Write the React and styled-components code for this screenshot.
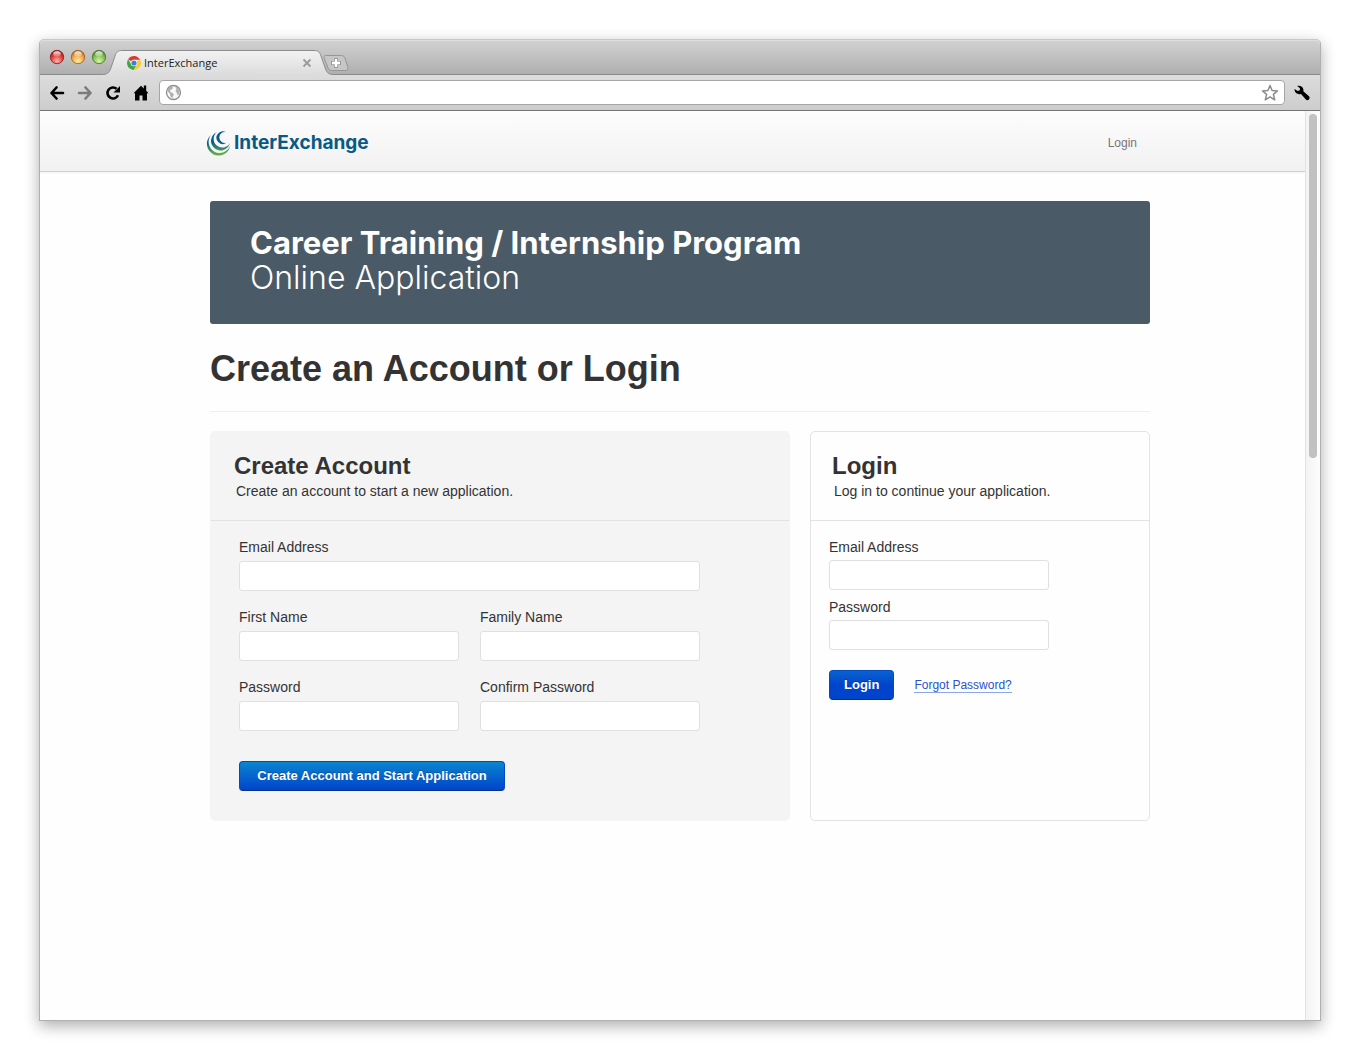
import React from "react";
import styled, { createGlobalStyle, css } from "styled-components";

const GlobalStyle = createGlobalStyle`
  *, *::before, *::after { box-sizing: border-box; }
  body {
    margin: 0;
    background: #fff;
    color: #333;
    font-family: "Liberation Sans", Arial, sans-serif;
    font-size: 14px;
    line-height: 20px;
  }
  h1, h2, p { margin: 0; }
`;

/* ---------- browser window ---------- */

const Desktop = styled.div`
  display: flex;
  min-height: 100vh;
  padding: 39px;
`;

const Window = styled.div`
  flex: 1;
  min-width: 0;
  display: flex;
  flex-direction: column;
  border: 1px solid #b0b0b0;
  border-top-color: #c8c8c8;
  border-radius: 5px 5px 0 0;
  background: #fefefe;
  box-shadow: 0 5px 15px rgba(0, 0, 0, 0.32);
`;

const TitleBar = styled.div`
  display: flex;
  align-items: flex-end;
  height: 35px;
  padding-left: 9px;
  border-radius: 4px 4px 0 0;
  background: linear-gradient(#d2d2d2, #aeaeae);
  box-shadow: inset 0 1px 0 #dedede, inset 0 -1px 0 #8a8a8a;
`;

const Lights = styled.div`
  display: flex;
  gap: 5px;
  height: 26px;
`;

const TabShell = styled.div`
  display: flex;
  height: 25px;
  margin-left: -5px;
`;

const TabBody = styled.div`
  display: flex;
  align-items: center;
  width: 192px;
  padding: 0 2px 0 5px;
  border-top: 1px solid #8c8c8c;
  background: linear-gradient(#f2f2f2, #dcdcdc);
  font: 11px/16px "Open Sans", "Noto Sans", sans-serif;
  color: #222;
`;

const TabTitle = styled.span`
  flex: 1;
  margin-left: 3px;
`;

const IconButton = styled.button`
  display: flex;
  align-items: center;
  justify-content: center;
  width: ${(p) => p.$width || 28}px;
  padding: 0;
  border: 0;
  background: none;
  color: ${(p) => p.$color || "#000"};
`;

const NewTab = styled(IconButton)`
  align-items: flex-start;
  height: 20px;
  margin-left: -12px;
`;

const Toolbar = styled.div`
  display: flex;
  align-items: center;
  height: 36px;
  padding: 0 2px 0 3px;
  border-bottom: 1px solid #757575;
  background: linear-gradient(#dcdcdc, #cdcdcd);
`;

const AddressBar = styled.div`
  flex: 1;
  display: flex;
  align-items: center;
  height: 25px;
  margin-left: 4px;
  padding: 0 5px;
  border: 1px solid #a6a6a6;
  border-radius: 4px;
  background: #fff;
`;

const AddressInput = styled.input`
  flex: 1;
  min-width: 0;
  border: 0;
  outline: 0;
  background: none;
  font: 13px/18px "Open Sans", sans-serif;
`;

const Viewport = styled.div`
  flex: 1;
  display: flex;
`;

const Page = styled.div`
  flex: 1;
  min-width: 0;
`;

const ScrollTrack = styled.div`
  width: 15px;
  padding: 3px 3px 0;
  border-left: 1px solid #e2e2e2;
  background: linear-gradient(90deg, #f3f3f3, #fdfdfd);
`;

const ScrollThumb = styled.div`
  height: 38%;
  border-radius: 4px;
  background: #c1c1c1;
`;

/* ---------- site ---------- */

const SiteHeader = styled.header`
  padding-left: 15px;
  border-bottom: 1px solid #d0d0d0;
  background: linear-gradient(#fdfdfd, #f1f1f1);
  box-shadow: 0 1px 2px rgba(0, 0, 0, 0.06);
`;

const HeaderInner = styled.div`
  display: flex;
  align-items: center;
  justify-content: space-between;
  max-width: 948px;
  height: 60px;
  margin: 0 auto;
  padding: 4px 17px 0 0;
`;

const Logo = styled.a`
  display: flex;
  align-items: center;
  gap: 3px;
  color: #075a86;
  font: 700 19px/26px Inter, sans-serif;
  text-decoration: none;
`;

const NavLink = styled.a`
  color: #777;
  font-size: 12px;
  text-decoration: none;
`;

const Content = styled.main`
  padding: 29px 0 20px 15px;
`;

const Container = styled.div`
  max-width: 940px;
  margin: 0 auto;
`;

const Banner = styled.div`
  padding: 24px 40px 29px;
  border-radius: 3px;
  background: #4a5a66;
  color: #fff;
  font: 300 32px/35px Inter, sans-serif;
`;

const BannerTitle = styled.strong`
  display: block;
  font-size: 31px;
  font-weight: 700;
`;

const PageTitle = styled.h1`
  margin: 25px 0 19px;
  padding-bottom: 22px;
  border-bottom: 1px solid #eee;
  font-size: 36px;
  line-height: 40px;
`;

const Cards = styled.div`
  display: grid;
  grid-template-columns: 1fr 340px;
  gap: 20px;
`;

const Card = styled.section`
  min-height: 390px;
  border: 1px solid #e3e3e3;
  border-radius: 5px;
  ${(p) =>
    p.$filled &&
    css`
      border-color: #f4f4f4;
      background: #f4f4f4;
    `}
`;

const CardHead = styled.div`
  padding: 19px ${(p) => p.$inset}px;
  border-bottom: 1px solid #e2e2e2;
`;

const CardTitle = styled.h2`
  font-size: 24px;
  line-height: 30px;
`;

const CardNote = styled.p`
  padding-left: 2px;
`;

const Form = styled.form`
  padding: 16px ${(p) => p.$inset}px 29px;
`;

const Fields = styled.div`
  display: grid;
  grid-template-columns: repeat(${(p) => p.$columns}, 220px);
  gap: ${(p) => p.$rowGap}px 21px;
`;

const FieldBox = styled.div`
  display: flex;
  flex-direction: column;
  gap: ${(p) => p.$gap}px;
  ${(p) => p.$wide && "grid-column: 1 / -1;"}
`;

const TextInput = styled.input`
  width: 100%;
  height: 30px;
  padding: 4px 8px;
  border: 1px solid #e0e0e0;
  border-radius: 3px;
  background: #fff;
  font: inherit;
`;

const Actions = styled.div`
  display: flex;
  align-items: center;
  gap: 20px;
  margin-top: ${(p) => p.$top}px;
`;

const Button = styled.button`
  height: 30px;
  min-width: ${(p) => p.$minWidth}px;
  padding: 0 14px;
  border: 1px solid #0449c4;
  border-bottom-color: #04318c;
  border-radius: 4px;
  background: linear-gradient(${(p) => p.$from}, #0044cc ${(p) => p.$stop});
  color: #fff;
  font: bold 13px/20px "Liberation Sans", Arial, sans-serif;
  text-shadow: 0 -1px 0 rgba(0, 0, 0, 0.25);
`;

const ForgotLink = styled.a`
  border-bottom: 1px solid #8ea4e8;
  color: #2a52cc;
  font-size: 12px;
  line-height: 14px;
  text-decoration: none;
`;

/* ---------- drawings ---------- */

function Light({ id, edge, base, glow }) {
  return (
    <svg width="16" height="16" viewBox="0 0 16 16" aria-hidden="true">
      <defs>
        <radialGradient id={id} cx="0.5" cy="0.8" r="0.75">
          <stop offset="0" stopColor={glow} />
          <stop offset="0.6" stopColor={base} />
          <stop offset="1" stopColor={edge} />
        </radialGradient>
        <linearGradient id={`${id}-shine`} x1="0" y1="0" x2="0" y2="1">
          <stop offset="0" stopColor="#fff" stopOpacity="0.9" />
          <stop offset="1" stopColor="#fff" stopOpacity="0.15" />
        </linearGradient>
      </defs>
      <circle cx="8" cy="8" r="6.7" fill={`url(#${id})`} stroke={edge} strokeOpacity="0.85" />
      <ellipse cx="8" cy="5" rx="3.800" ry="2.700" fill={`url(#${id}-shine)`} />
    </svg>
  );
}

function TabEdge({ side }) {
  const flip = side === "right" ? "translate(20 0) scale(-1 1)" : undefined;
  return (
    <svg width="20" height="25" viewBox="0 0 20 25" aria-hidden="true">
      <defs>
        <linearGradient id={`edge-${side}`} x1="0" y1="0" x2="0" y2="25" gradientUnits="userSpaceOnUse">
          <stop offset="0" stopColor="#f2f2f2" />
          <stop offset="1" stopColor="#dcdcdc" />
        </linearGradient>
      </defs>
      <g transform={flip}>
        <path d="M0 25V24.5C5 24.5 7 23 8.500 19L13 6C14.300 2 16 .5 20 .5V25Z" fill={`url(#edge-${side})`} />
        <path d="M0 24.500C5 24.500 7 23 8.500 19L13 6C14.300 2 16 .5 20 .5" fill="none" stroke="#8c8c8c" />
      </g>
    </svg>
  );
}

const ChromeIcon = () => (
  <svg width="14" height="14" viewBox="0 0 14 14" aria-hidden="true">
    <path d="M7 7L1.100 3.300A7 7 0 0 1 13.200 3.800H7Z" fill="#dd3b2e" />
    <path d="M7 7L13.200 3.800A7 7 0 0 1 6.500 14L9.800 8.500Z" fill="#fccd2b" />
    <path d="M7 7L9.800 8.500L6.500 14A7 7 0 0 1 1.100 3.300L4.300 8.600Z" fill="#3fa548" />
    <circle cx="7" cy="7" r="3.200" fill="#fff" />
    <circle cx="7" cy="7" r="2.600" fill="#3f7fd9" />
  </svg>
);

const CloseIcon = () => (
  <svg width="10" height="10" viewBox="0 0 10 10" aria-hidden="true">
    <path d="M1.500 1.500L8.500 8.500M8.500 1.500L1.500 8.500" stroke="currentColor" strokeWidth="1.800" />
  </svg>
);

const NewTabIcon = () => (
  <svg width="26" height="17" viewBox="0 0 26 17" aria-hidden="true">
    <path
      d="M2.500 .5H18.500Q21 .5 22 3L25 12.500Q25.800 15.500 23 15.500H8.500Q6 15.500 5 13L1 2.500Q.5 .5 2.500 .5Z"
      fill="#c6c6c6"
      stroke="#969696"
    />
    <path d="M13 3V13M8 8H18" stroke="#9a9a9a" strokeWidth="4" />
    <path d="M13 4V12M9 8H17" stroke="#fff" strokeWidth="2.300" />
  </svg>
);

const ArrowIcon = ({ forward }) => (
  <svg width="16" height="14" viewBox="0 0 16 14" aria-hidden="true">
    <path
      d="M7.500 1.500L2.500 7L7.500 12.500M3 7H14"
      transform={forward ? "translate(16 0) scale(-1 1)" : undefined}
      fill="none"
      stroke="currentColor"
      strokeWidth="2.600"
      strokeLinecap="round"
      strokeLinejoin="round"
    />
  </svg>
);

const ReloadIcon = () => (
  <svg width="16" height="16" viewBox="0 0 16 16" aria-hidden="true">
    <path d="M13 10.300A5.500 5.500 0 1 1 11.600 3.800" fill="none" stroke="currentColor" strokeWidth="2.600" />
    <path d="M15 1V7.500H8.500Z" fill="currentColor" />
  </svg>
);

const HomeIcon = () => (
  <svg width="16" height="16" viewBox="0 0 16 16" aria-hidden="true">
    <path d="M8 .8L10.800 3.500V.5H13.200V5.800L15.500 8.200H14V15.500H9.500V10.500H6.500V15.500H2V8.200H.5Z" fill="currentColor" />
  </svg>
);

const GlobeIcon = () => (
  <svg width="17" height="17" viewBox="0 0 17 17" aria-hidden="true">
    <circle cx="8.500" cy="8.500" r="7" fill="#f8f8f8" stroke="#8d8d8d" strokeWidth="1.300" />
    <path
      d="M3 4.500L6.500 2L8 3.500L6.800 5.500L5 6L5.500 8L7.500 9L9 10.500L7.800 12.500L7.500 14.500L5.500 12.500L4.800 9.500L2.500 7.500Z"
      fill="#b0b0b0"
    />
    <path d="M10 2.500L13 4L14.700 7L14 10.500L12.500 11.500L12 9L10.500 7.500L11.500 5Z" fill="#b0b0b0" />
  </svg>
);

const StarIcon = () => (
  <svg width="18" height="18" viewBox="0 0 18 18" aria-hidden="true">
    <path
      d="M9 1.500L11.100 6.500L16.500 6.900L12.400 10.400L13.700 15.800L9 12.900L4.300 15.800L5.600 10.400L1.500 6.900L6.900 6.500Z"
      fill="#fff"
      stroke="#8b8b8b"
      strokeWidth="1.500"
      strokeLinejoin="round"
    />
  </svg>
);

const WrenchIcon = () => (
  <svg width="16" height="16" viewBox="0 0 16 16" aria-hidden="true">
    <path
      d="M3.200 .9C5.600 .1 8.500 1.300 9.300 3.900C9.500 4.800 9.500 5.500 9.300 6.300L15 11.300C16 12.300 15.600 13.600 14.900 14.400C14.100 15.200 12.800 15.500 11.900 14.600L7 8.900C4.200 9.800 1.300 8.500 .6 5.600C.5 4.900 .5 4.400 .6 3.900L3.600 6L5.800 5.300L6 3.200Z"
      fill="currentColor"
    />
  </svg>
);

const LogoMark = () => (
  <svg width="25" height="25" viewBox="0 0 25 25" aria-hidden="true">
    <defs>
      <linearGradient id="mark" x1="0" y1="0" x2="0" y2="25" gradientUnits="userSpaceOnUse">
        <stop offset="0.45" stopColor="#07598a" />
        <stop offset="0.66" stopColor="#2f8272" />
        <stop offset="0.9" stopColor="#62ac46" />
      </linearGradient>
    </defs>
    <g fill="url(#mark)">
      <path d="M5 4A11.700 11.700 0 1 0 24.200 14.500A11.100 11.100 0 1 1 5 4Z" />
      <path d="M11 1A9.600 9.600 0 1 0 24 12A8.700 8.700 0 1 1 11 1Z" />
      <path d="M20 1.200A6.300 6.300 0 1 0 20.500 11.800A5.500 5.500 0 1 1 20 1.200Z" />
    </g>
  </svg>
);

/* ---------- composition ---------- */

function Field({ id, label, type = "text", wide, gap }) {
  return (
    <FieldBox $wide={wide} $gap={gap}>
      <label htmlFor={id}>{label}</label>
      <TextInput id={id} type={type} />
    </FieldBox>
  );
}

const hold = (e) => e.preventDefault();

function BrowserChrome() {
  return (
    <>
      <TitleBar>
        <Lights>
          <Light id="light-close" edge="#8f1f1c" base="#e23a38" glow="#ffb8b0" />
          <Light id="light-min" edge="#a8601c" base="#f3a54a" glow="#fff0a0" />
          <Light id="light-zoom" edge="#47792a" base="#80c04e" glow="#d8f7a8" />
        </Lights>
        <TabShell>
          <TabEdge side="left" />
          <TabBody>
            <ChromeIcon />
            <TabTitle>InterExchange</TabTitle>
            <IconButton $width={10} $color="#9a9a9a" aria-label="Close tab">
              <CloseIcon />
            </IconButton>
          </TabBody>
          <TabEdge side="right" />
        </TabShell>
        <NewTab aria-label="New tab">
          <NewTabIcon />
        </NewTab>
      </TitleBar>
      <Toolbar>
        <IconButton aria-label="Back">
          <ArrowIcon />
        </IconButton>
        <IconButton aria-label="Forward" $color="#7b7b7b">
          <ArrowIcon forward />
        </IconButton>
        <IconButton aria-label="Reload">
          <ReloadIcon />
        </IconButton>
        <IconButton aria-label="Home">
          <HomeIcon />
        </IconButton>
        <AddressBar>
          <GlobeIcon />
          <AddressInput aria-label="Address" />
          <IconButton $width={18} aria-label="Bookmark">
            <StarIcon />
          </IconButton>
        </AddressBar>
        <IconButton $width={33} aria-label="Settings">
          <WrenchIcon />
        </IconButton>
      </Toolbar>
    </>
  );
}

export default function App() {
  return (
    <>
      <GlobalStyle />
      <Desktop>
        <Window>
          <BrowserChrome />
          <Viewport>
            <Page>
              <SiteHeader>
                <HeaderInner>
                  <Logo href="#home">
                    <LogoMark />
                    InterExchange
                  </Logo>
                  <NavLink href="#login">Login</NavLink>
                </HeaderInner>
              </SiteHeader>
              <Content>
                <Container>
                  <Banner>
                    <BannerTitle>Career Training / Internship Program</BannerTitle>
                    Online Application
                  </Banner>
                  <PageTitle>Create an Account or Login</PageTitle>
                  <Cards>
                    <Card $filled>
                      <CardHead $inset={23}>
                        <CardTitle>Create Account</CardTitle>
                        <CardNote>Create an account to start a new application.</CardNote>
                      </CardHead>
                      <Form $inset={28} onSubmit={hold}>
                        <Fields $columns={2} $rowGap={16}>
                          <Field id="new-email" label="Email Address" type="email" wide gap={4} />
                          <Field id="first-name" label="First Name" gap={4} />
                          <Field id="family-name" label="Family Name" gap={4} />
                          <Field id="new-password" label="Password" type="password" gap={4} />
                          <Field id="confirm-password" label="Confirm Password" type="password" gap={4} />
                        </Fields>
                        <Actions $top={30}>
                          <Button type="submit" $minWidth={266} $from="#0a86cf" $stop="100%">
                            Create Account and Start Application
                          </Button>
                        </Actions>
                      </Form>
                    </Card>
                    <Card id="login">
                      <CardHead $inset={21}>
                        <CardTitle>Login</CardTitle>
                        <CardNote>Log in to continue your application.</CardNote>
                      </CardHead>
                      <Form $inset={18} onSubmit={hold}>
                        <Fields $columns={1} $rowGap={7}>
                          <Field id="email" label="Email Address" type="email" gap={3} />
                          <Field id="password" label="Password" type="password" gap={3} />
                        </Fields>
                        <Actions $top={20}>
                          <Button type="submit" $minWidth={65} $from="#0a62cf" $stop="50%">
                            Login
                          </Button>
                          <ForgotLink href="#forgot">Forgot Password?</ForgotLink>
                        </Actions>
                      </Form>
                    </Card>
                  </Cards>
                </Container>
              </Content>
            </Page>
            <ScrollTrack>
              <ScrollThumb />
            </ScrollTrack>
          </Viewport>
        </Window>
      </Desktop>
    </>
  );
}
